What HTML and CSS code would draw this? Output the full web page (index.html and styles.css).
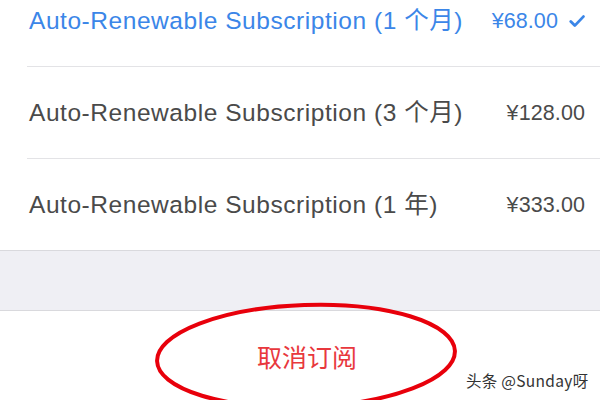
FILE: index.html
```html
<!DOCTYPE html>
<html>
<head>
<meta charset="utf-8">
<link rel="stylesheet" href="styles.css">
</head>
<body>
<div class="list">
  <div class="row selected">
    <span class="name">Auto-Renewable Subscription (1 个月)</span>
    <span class="price">¥68.00<svg class="check" width="16" height="14" viewBox="0 0 16 14"><path d="M1.8 7.6 L5.8 11.6 L14.4 2.6" fill="none" stroke="#3b86e8" stroke-width="2.8" stroke-linecap="round" stroke-linejoin="round"/></svg></span>
  </div>
  <div class="row">
    <span class="name">Auto-Renewable Subscription (3 个月)</span>
    <span class="price">¥128.00</span>
  </div>
  <div class="row last">
    <span class="name">Auto-Renewable Subscription (1 年)</span>
    <span class="price">¥333.00</span>
  </div>
</div>
<div class="band"></div>
<div class="cancel">
  <span class="cancel-text">取消订阅</span>
  <svg class="ring" width="320" height="120" viewBox="0 0 320 120"><ellipse cx="160" cy="57" rx="149" ry="51" transform="rotate(-2 160 57)" fill="none" stroke="#e8000b" stroke-width="4"/></svg>
  <span class="mark">头条 @Sunday呀</span>
</div>
</body>
</html>
```
FILE: styles.css
```css
html, body {
  margin: 0;
  padding: 0;
  width: 600px;
  height: 400px;
  overflow: hidden;
  background: #ffffff;
  font-family: "Liberation Sans", "Noto Sans CJK SC", sans-serif;
}
.list {
  background: #ffffff;
  padding-left: 27px;
  margin-top: -25px;
  border-bottom: 1px solid #d9d9dd;
}
.row {
  height: 91px;
  display: flex;
  align-items: center;
  justify-content: space-between;
  padding-right: 15px;
  padding-left: 2px;
  border-bottom: 1px solid #e3e3e6;
  color: #4a4a4a;
}
.row.last {
  border-bottom: none;
}
.row.selected {
  color: #3b86e8;
}
.name {
  font-size: 24.5px;
  line-height: 30px;
  letter-spacing: 0.55px;
}
.price {
  display: flex;
  align-items: center;
  font-size: 21.5px;
  line-height: 30px;
  letter-spacing: 0.1px;
}
.check {
  margin-left: 11px;
  margin-right: 0;
}
.band {
  height: 59px;
  background: #efeff4;
  border-bottom: 1px solid #d9d9dd;
}
.cancel {
  position: relative;
  height: 100px;
  display: flex;
  justify-content: center;
  align-items: center;
}
.cancel-text {
  color: #e8383d;
  font-size: 25px;
  line-height: 30px;
  font-family: "Noto Sans CJK SC", sans-serif;
  margin-left: 14px;
  margin-top: -10px;
}
.ring {
  position: absolute;
  left: 146px;
  top: -12px;
}
.mark {
  position: absolute;
  left: 466px;
  top: 61px;
  font-size: 15.5px;
  line-height: 16px;
  letter-spacing: 0.3px;
  color: #333333;
  font-family: "Noto Sans CJK SC", sans-serif;
  text-shadow: 0 0 2px #ffffff;
}
```
